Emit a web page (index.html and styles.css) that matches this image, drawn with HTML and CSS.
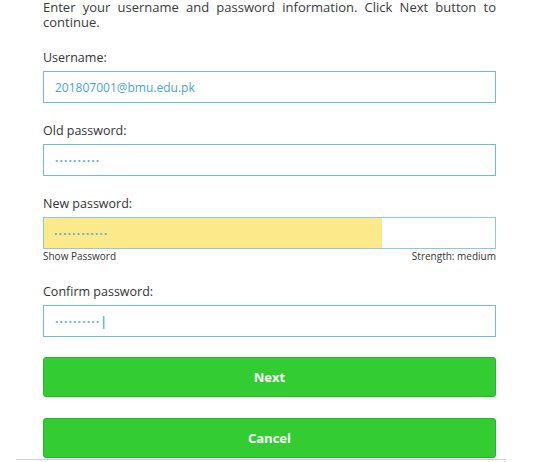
FILE: index.html
```html
<!DOCTYPE html>
<html lang="en">
<head>
  <meta charset="UTF-8" />
  <title>Change Password</title>
  <link rel="stylesheet" href="styles.css">
</head>
<body>
  <div class="panel">
    <p class="intro">Enter your username and password information. Click Next button to continue.</p>

    <div class="group">
      <label for="username">Username:</label>
      <input id="username" class="field" type="text" value="201807001@bmu.edu.pk" />
    </div>

    <div class="group">
      <label for="old-pass">Old password:</label>
      <input id="old-pass" class="field dots" type="text" value="··········" />
    </div>

    <div class="group">
      <label for="new-pass">New password:</label>
      <div class="meter-field">
        <div class="meter-bar" style="width: 75%"></div>
        <input id="new-pass" class="field dots bare" type="text" value="············" />
      </div>
      <div class="meta-row">
        <span>Show Password</span>
        <span>Strength: medium</span>
      </div>
    </div>

    <div class="group">
      <label for="confirm-pass">Confirm password:</label>
      <input id="confirm-pass" class="field dots" type="text" value="··········|" />
    </div>

    <button class="btn" type="button">Next</button>
    <button class="btn" type="button">Cancel</button>
  </div>
</body>
</html>
```

FILE: styles.css
```css
body {
  margin: 0;
  font-family: "Open Sans", "Noto Sans", sans-serif;
  color: #333;
  background: #fff;
}
.panel {
  width: 490px;
  margin: 0 0 0 16px;
  padding: 0 10px 1px 27px;
  box-sizing: border-box;
  border-bottom: 1px solid #cfcfcf;
}
.intro {
  margin: 0 0 20px;
  font-size: 13px;
  line-height: 15px;
  text-align: justify;
  color: #3a3a3a;
}
.group {
  margin-bottom: 20px;
}
.group label {
  display: block;
  font-size: 12.5px;
  line-height: 16px;
  margin-bottom: 5px;
}
.field {
  display: block;
  width: 100%;
  height: 32px;
  box-sizing: border-box;
  padding: 0 11px;
  border: 1px solid #6cbfd0;
  font-family: inherit;
  font-size: 12px;
  color: #4aa4d2;
  background: #fff;
  outline: none;
}
.dots {
  letter-spacing: 1.1px;
  font-weight: bold;
  color: #5ab0dc;
}
.meter-field {
  display: grid;
  height: 32px;
  box-sizing: border-box;
  border: 1px solid #8cc8e6;
}
.meter-bar,
.meter-field .bare {
  grid-area: 1 / 1;
}
.meter-bar {
  background: #fce98a;
}
.meter-field .bare {
  height: 30px;
  border: 0;
  padding-left: 10px;
  background: transparent;
}
.meta-row {
  display: flex;
  justify-content: space-between;
  font-size: 10px;
  line-height: 15px;
  color: #333;
}
.btn {
  display: block;
  width: 100%;
  height: 40px;
  margin-bottom: 21px;
  border: 1px solid #1fbb1f;
  border-radius: 3px;
  background: #33cc33;
  color: #fff;
  font-family: inherit;
  font-size: 13px;
  font-weight: bold;
}
.btn:last-child {
  margin-bottom: 0;
}
```
